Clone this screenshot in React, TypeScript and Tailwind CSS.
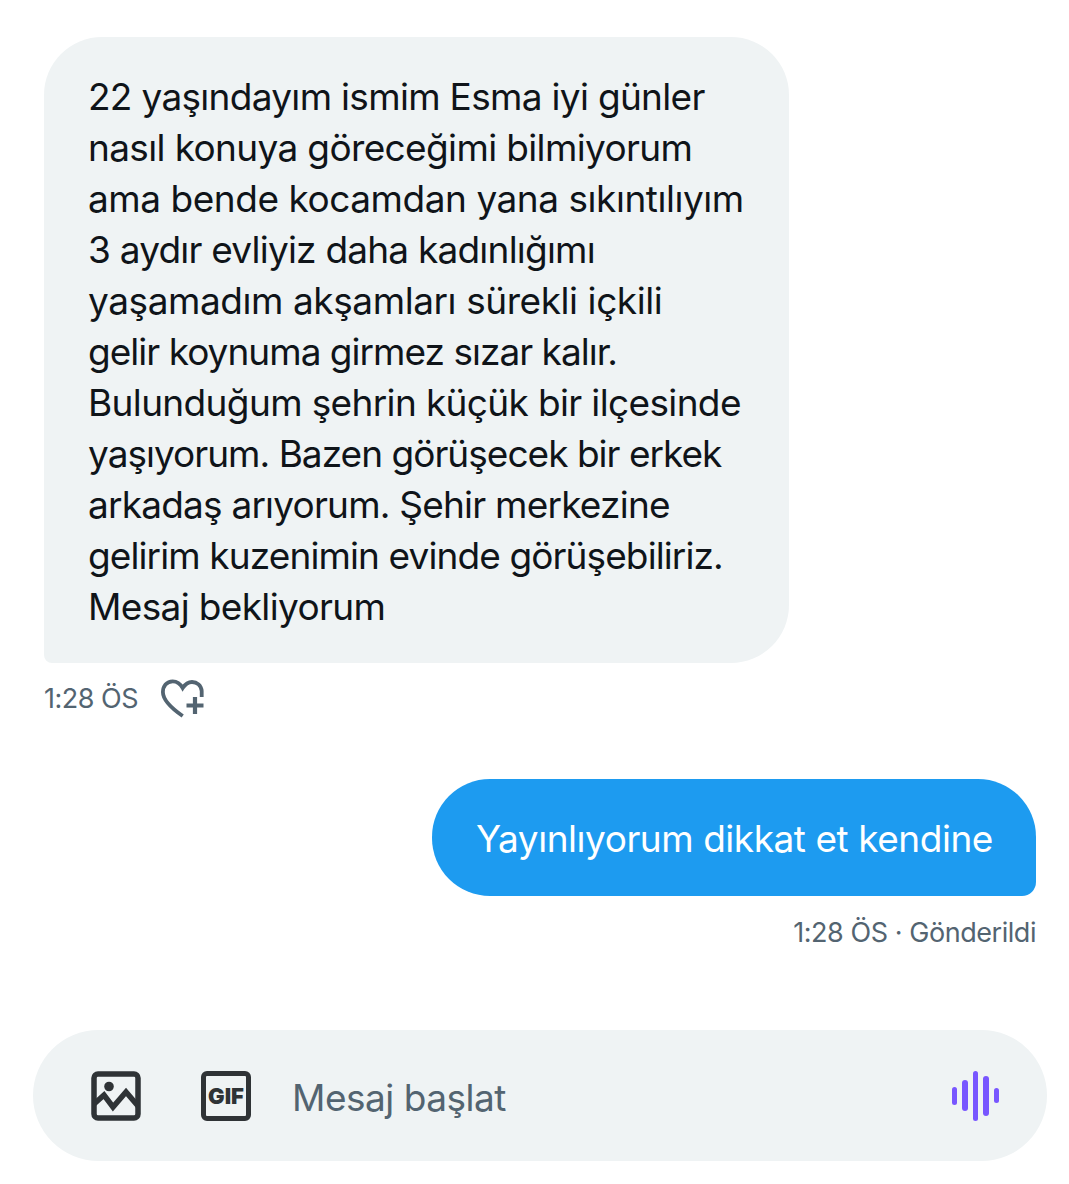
import React from "react";

const font = { fontFamily: "Inter, sans-serif" };

// tracking per line: Inter's widths differ a bit from the original font
const lines = [
  { text: "22 yaşındayım ismim Esma iyi günler", cls: "tracking-[-0.69px]" },
  { text: "nasıl konuya göreceğimi bilmiyorum", cls: "tracking-[-0.64px]" },
  { text: "ama bende kocamdan yana sıkıntılıyım", cls: "tracking-[-0.46px]" },
  { text: "3 aydır evliyiz daha kadınlığımı", cls: "tracking-[-0.78px]" },
  { text: "yaşamadım akşamları sürekli içkili", cls: "tracking-[-0.43px]" },
  { text: "gelir koynuma girmez sızar kalır.", cls: "tracking-[-0.98px]" },
  { text: "Bulunduğum şehrin küçük bir ilçesinde", cls: "tracking-[-0.64px]" },
  { text: "yaşıyorum. Bazen görüşecek bir erkek", cls: "tracking-[-0.98px]" },
  { text: "arkadaş arıyorum. Şehir merkezine", cls: "tracking-[-0.79px]" },
  { text: "gelirim kuzenimin evinde görüşebiliriz.", cls: "tracking-[-0.89px]" },
  { text: "Mesaj bekliyorum", cls: "tracking-[-0.65px]" },
];

function HeartPlus() {
  return (
    <svg width="44" height="40" viewBox="0 0 44 40" fill="none" stroke="#536471" strokeWidth="3.8">
      <path d="M40.7 18V12C40.2 6.5 36 3 31 3C27 3 24 5.5 21.7 9C19.5 5 16 2.3 11.7 2.3C5.5 2.3 1.9 7.5 1.9 13C1.9 22 13 31 21.7 37" />
      <path d="M34 18v17M25.5 26.5h17" strokeWidth="4.2" />
    </svg>
  );
}

function ImageIcon() {
  return (
    <svg width="50" height="50" viewBox="0 0 50 50" fill="none" stroke="#2f3336" strokeWidth="5.5">
      <rect x="3" y="3" width="44" height="44" rx="4" />
      <circle cx="18" cy="15.500" r="4.800" fill="#2f3336" stroke="none" />
      <path d="M3 33L13 24L22 36L35 21L47 35" />
    </svg>
  );
}

function VoiceIcon() {
  const bars = [18, 31, 50, 40, 15];
  return (
    <div className="flex h-[50px] items-center gap-[5px]">
      {bars.map((h, i) => (
        <div key={i} className="w-[5.500px] rounded-full bg-[#7856ff]" style={{ height: h }} />
      ))}
    </div>
  );
}

export default function App() {
  return (
    <div className="flex h-[1184px] w-[1069px] flex-col overflow-hidden bg-white" style={font}>
      <div className="ml-[44px] mt-[37px] w-[745px] rounded-[58px] rounded-bl-[8px] bg-[#eff3f4] pb-[31px] pl-[44px] pt-[34px] text-[37px] leading-[51px] text-[#0f1419]">
        {lines.map((line) => (
          <div key={line.text} className={`whitespace-nowrap ${line.cls}`}>
            {line.text}
          </div>
        ))}
      </div>

      <div className="ml-[44px] mt-[15px] flex items-center gap-[23px]">
        <span className="text-[27px] leading-[42px] tracking-[-0.5px] text-[#536471]">1:28 ÖS</span>
        <HeartPlus />
      </div>

      <div className="mr-[33px] mt-[59px] flex h-[117px] w-[604px] items-center self-end rounded-[58px] rounded-br-[14px] bg-[#1d9bf0] pl-[44px] pt-[3px] text-[37px] tracking-[-0.46px] whitespace-nowrap text-white">
        Yayınlıyorum dikkat et kendine
      </div>

      <div className="mr-[33px] mt-[16px] self-end text-[27px] leading-[42px] tracking-[-0.45px] text-[#536471]">
        1:28 ÖS · Gönderildi
      </div>

      <div className="ml-[33px] mt-[76px] flex h-[131px] w-[1014px] items-center rounded-full bg-[#eff3f4] pl-[58px] pr-[48px]">
        <ImageIcon />
        <div className="ml-[60px] flex h-[50px] w-[50px] items-center justify-center rounded-[6px] border-[5.5px] border-[#2f3336] text-[22px] leading-none font-black text-[#2f3336]">
          GIF
        </div>
        <span className="ml-[41px] pt-[5px] text-[37px] tracking-[-0.5px] text-[#536471]">Mesaj başlat</span>
        <div className="ml-auto">
          <VoiceIcon />
        </div>
      </div>
    </div>
  );
}
